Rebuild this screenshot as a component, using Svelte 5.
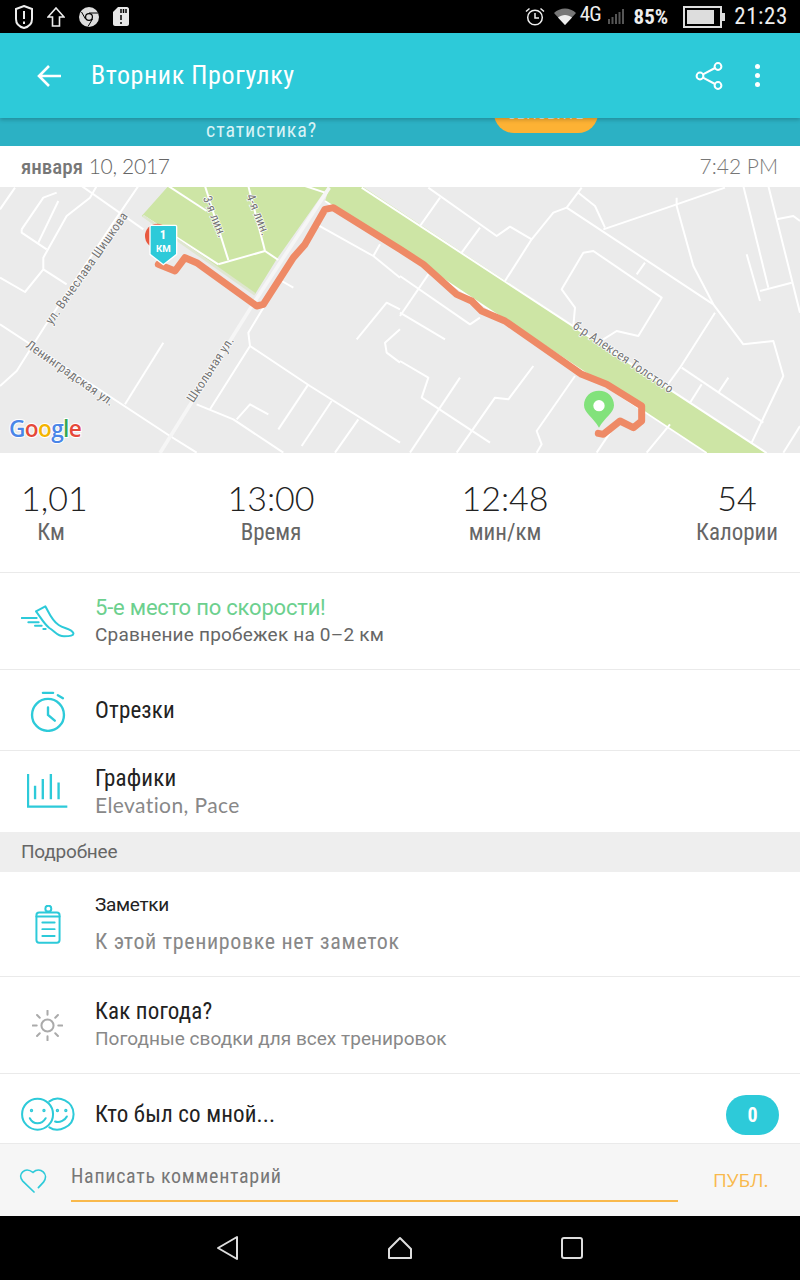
<script>
	// map geometry is in 3x px of the map box, split at the middle (right half is offset)
	const leftRoads = [
		'0,70 45,5', '245,0 430,130', '290,0 270,35 200,90 130,215 130,250 75,318 0,275',
		'130,250 200,295', '65,130 130,35 170,20', '65,130 65,140 140,190', '175,45 115,170',
		'415,0 340,110 135,420 50,555 0,600', '0,415 510,750 590,800', '375,655 490,470',
		'790,365 745,440 750,480 630,670', '750,480 930,600 1200,770', '925,595 835,730',
		'995,645 905,780', '1075,700 1005,800', '590,655 700,700 850,800', '710,700 750,655 805,685',
		'845,285 880,305', '950,115 1120,210 1200,275', '1140,175 1120,210', '1070,460 1160,350 1200,370',
		'1200,430 1155,470 1160,500 1200,530', '915,0 975,20'
	];
	const rightRoads = [
		'85,5 290,150 330,122 395,160', '120,35 60,120', '240,125 185,200', '395,160 315,285',
		'395,160 460,80 500,65 545,5', '500,65 940,355 1030,475 1120,465 1150,570 1055,770',
		'535,20 585,60 615,125', '610,130 830,55 975,5', '830,35 830,60 880,240 940,355',
		'1030,0 1105,305', '1105,0 1200,380', '1040,205 1080,345', '1080,315 1175,290', '1130,100 1180,90 1200,105',
		'610,460 650,435 715,450 785,335 580,195 550,200 485,310 525,365 520,420', '735,230 710,265',
		'945,380 840,545 800,600', '845,545 1090,710', '905,595 870,650', '985,575 955,620',
		'0,270 210,415 240,395', '85,265 0,390', '0,380 135,460', '0,525 85,575 65,635 270,770',
		'180,575 30,800', '400,540 325,640 285,635 170,800', '525,570 410,735 425,775 410,800',
		'630,740 590,800', '810,715 740,800', '1150,800 1200,720'
	];
	const parkPaths = [
		'505,0 620,75', '615,0 685,222', '745,0 795,195', '655,235 795,195', '795,195 835,222', '430,90 655,235'
	];
	const route = '475,235 525,255 555,215 590,230 770,360 790,355 880,215 915,175 975,70 1000,65 1200,190 1270,235 1370,325 1415,345 1445,375 1515,405 1745,565 1820,595 1925,660 1925,705 1900,725 1860,705 1810,745 1795,742';
	const stats = [
		{ value: '1,01', label: 'Км' },
		{ value: '13:00', label: 'Время' },
		{ value: '12:48', label: 'мин/км' },
		{ value: '54', label: 'Калории' }
	];
</script>

<div class="screen">
	<div class="status">
		<div class="status-left">
			<svg width="18" height="24" viewBox="0 0 18 24" fill="none" stroke="#eee" stroke-width="2">
				<path d="M9 1 L17 4 V14 C17 19 13 22 9 23 C5 22 1 19 1 14 V4Z" />
				<path d="M9 6 V14 M9 16.5 V19" />
			</svg>
			<svg width="18" height="20" viewBox="0 0 18 20" fill="none" stroke="#eee" stroke-width="1.6">
				<path d="M9 1 L17 10 H12.5 V19 H5.5 V10 H1Z" />
			</svg>
			<svg width="20" height="20" viewBox="0 0 20 20">
				<circle cx="10" cy="10" r="10" fill="#ddd" />
				<circle cx="10" cy="10" r="4" fill="#000" />
				<circle cx="10" cy="10" r="2.8" fill="#ddd" />
				<path d="M10 6 H19 M6.5 12 L2.5 5 M13.5 12 L9 19.5" stroke="#000" stroke-width="1" />
			</svg>
			<svg width="16" height="19" viewBox="0 0 16 19">
				<path d="M5 0 H14 C15 0 16 1 16 2 V17 C16 18 15 19 14 19 H2 C1 19 0 18 0 17 V5Z" fill="#e8e8e8" />
				<path d="M8 2 V6 M10.5 2 V6 M13 2 V6 M8 8 V13 M8 15 V17" stroke="#000" stroke-width="1.5" />
			</svg>
		</div>
		<div class="status-right">
			<svg class="alarm" width="20" height="19" viewBox="0 0 20 19" fill="none" stroke="#eee" stroke-width="1.5">
				<circle cx="10" cy="10.5" r="7.3" />
				<path d="M10 6 V11 H14 M1 4.5 L4.5 1.5 M19 4.5 L15.5 1.5" />
			</svg>
			<svg class="wifi" width="22" height="17" viewBox="0 0 22 17">
				<path d="M0 5 C6 -1 16 -1 22 5 L11 17Z" fill="#777" />
				<path d="M4 9.5 C8 6 14 6 18 9.5 L11 17Z" fill="#eee" />
			</svg>
			<span class="net">4G</span>
			<svg class="signal" width="16" height="15" viewBox="0 0 16 15" fill="#555">
				<rect x="0" y="10" width="2" height="5" />
				<rect x="3.5" y="8" width="2" height="7" />
				<rect x="7" y="5" width="2" height="10" />
				<rect x="10.5" y="3" width="2" height="12" />
				<rect x="14" y="0" width="2" height="15" />
			</svg>
			<span class="pct">85%</span>
			<svg class="battery" width="42" height="22" viewBox="0 0 42 22">
				<rect x="1" y="1" width="37" height="20" fill="none" stroke="#ddd" stroke-width="2" />
				<rect x="4" y="4" width="27" height="14" fill="#ddd" />
				<rect x="39" y="7" width="3" height="8" fill="#ddd" />
			</svg>
			<span class="clock">21:23</span>
		</div>
	</div>

	<header class="appbar">
		<svg class="back" width="24" height="24" viewBox="0 0 24 24" fill="none" stroke="#fff" stroke-width="2.6">
			<path d="M24 12 H3 M12 2 L2 12 L12 22" />
		</svg>
		<h1>Вторник Прогулку</h1>
		<svg class="share" width="28" height="28" viewBox="0 0 28 28" fill="none" stroke="#fff" stroke-width="2">
			<circle cx="5" cy="14" r="3.4" />
			<circle cx="23" cy="4.5" r="3.4" />
			<circle cx="23" cy="23.5" r="3.4" />
			<path d="M8 12.4 L20 6 M8 15.6 L20 22" />
		</svg>
		<div class="dots"><i></i><i></i><i></i></div>
	</header>

	<div class="promo">
		<span class="promo-text">статистика?</span>
		<span class="promo-btn">ОБНОВИТЬ</span>
	</div>

	<div class="dateline">
		<span><span class="month">января</span> <span class="day">10, 2017</span></span>
		<span class="time">7:42 PM</span>
	</div>

	<svg class="map" width="800" height="266" viewBox="0 3 2400 798">
		<rect x="0" y="0" width="2400" height="810" fill="#ebebeb" />
		<polygon points="425,90 505,0 985,0 830,220 765,325" fill="#cde5a5" />
		<polygon points="990,0 1085,0 2300,801 2120,801 975,45" fill="#cde5a5" />
		<g fill="none" stroke="#fff" stroke-width="6" stroke-linejoin="round">
			{#each leftRoads as pts}
				<polyline points={pts} />
			{/each}
			<g transform="translate(1200 0)">
				{#each rightRoads as pts}
					<polyline points={pts} />
				{/each}
			</g>
			{#each parkPaths as pts}
				<polyline points={pts} />
			{/each}
			<polyline points="1085,5 2300,801" />
			<polyline points="975,45 2120,801" stroke-width="5" />
			<polyline points="988,5 765,345 480,801" stroke="#f6f6f6" stroke-width="11" />
			<polyline points="430,90 765,325" stroke="#dfe6d0" stroke-width="8" />
		</g>
		<g class="map-label">
			<text transform="translate(155 418) rotate(-55)">ул. Вячеслава Шишкова</text>
			<text transform="translate(75 482) rotate(35)">Ленинградская ул.</text>
			<text transform="translate(580 652) rotate(-57)">Школьная ул.</text>
			<text transform="translate(608 36) rotate(68)">3-я лин.</text>
			<text transform="translate(738 30) rotate(68)">4-я лин.</text>
			<text transform="translate(1716 425) rotate(34)">б-р Алексея Толстого</text>
		</g>
		<circle cx="472" cy="150" r="37" fill="#e8593f" />
		<polyline points={route} fill="none" stroke="#ee8a66" stroke-width="21" stroke-linejoin="round" stroke-linecap="round" />
		<path d="M454 118 H526 C529 118 530 120 530 122 V205 L490 236 L450 205 V122 C450 120 451 118 454 118Z" fill="#2dcad9" stroke="#fff" stroke-width="4" />
		<text class="pin-1" x="489" y="159">1</text>
		<text class="pin-km" x="490" y="199">КМ</text>
		<path d="M1797 725 C1780 695 1752 680 1752 658 C1752 632 1772 614 1797 614 C1822 614 1842 632 1842 658 C1842 680 1814 695 1797 725Z" fill="#82e27b" />
		<circle cx="1797" cy="659" r="17" fill="#fff" />
		<text class="google" x="27" y="752"><tspan fill="#4a86e8">G</tspan><tspan fill="#e5493a">o</tspan><tspan fill="#f4b400">o</tspan><tspan fill="#4a86e8">g</tspan><tspan fill="#34a853">l</tspan><tspan fill="#e5493a">e</tspan></text>
	</svg>

	<section class="stats">
		{#each stats as s}
			<div class="stat">
				<div class="stat-value">{s.value}</div>
				<div class="stat-label">{s.label}</div>
			</div>
		{/each}
	</section>

	<div class="row rank">
		<div class="icon">
			<svg width="54" height="33" viewBox="63 103 162 99" fill="none" stroke="#2dcad9" stroke-width="6" stroke-linejoin="round" stroke-linecap="round">
				<path d="M108 122 L136 107 C146 122 152 146 176 163 C192 174 215 174 220 187 C222 195 210 197 192 197 C172 197 165 182 148 172 C132 160 122 140 108 122Z" />
				<path d="M65 142 H110 M85 155 H116 M105 165 H125 M130 175 H137" />
			</svg>
		</div>
		<div>
			<div class="rank-title">5-е место по скорости!</div>
			<div class="rank-sub">Сравнение пробежек на 0–2 км</div>
		</div>
	</div>

	<div class="row splits">
		<div class="icon">
			<svg width="36" height="41" viewBox="90 360 106 120" fill="none" stroke="#2dcad9" stroke-width="7" stroke-linecap="round">
				<circle cx="143" cy="430" r="47" />
				<path d="M143 408 V430 L163 447 M128 365 H158 M172 372 L187 381" />
			</svg>
		</div>
		<div class="row-title">Отрезки</div>
	</div>

	<div class="row charts">
		<div class="icon">
			<svg width="41" height="35" viewBox="84 612 122 104" fill="none" stroke="#2dcad9" stroke-width="7">
				<path d="M87 615 V712 H204 M108 650 V690 M131 630 V690 M155 615 V690 M178 640 V690" />
			</svg>
		</div>
		<div>
			<div class="row-title">Графики</div>
			<div class="row-latin">Elevation, Pace</div>
		</div>
	</div>

	<div class="section-head">Подробнее</div>

	<div class="row notes">
		<div class="icon">
			<svg width="26" height="39" viewBox="106 93 78 118" fill="none" stroke="#2dcad9" stroke-width="6" stroke-linecap="round">
				<rect x="110" y="116" width="70" height="91" rx="8" />
				<circle cx="146" cy="104" r="9" />
				<path d="M110 128 H180 M128 146 H165 M128 166 H165 M128 187 H165" />
			</svg>
		</div>
		<div>
			<div class="notes-title">Заметки</div>
			<div class="notes-sub">К этой тренировке нет заметок</div>
		</div>
	</div>

	<div class="row weather">
		<div class="icon">
			<svg width="31" height="31" viewBox="97 419 92 92" fill="none" stroke="#aaa" stroke-width="6" stroke-linecap="round">
				<circle cx="143" cy="465" r="18" />
				<path d="M143 421 V433 M143 497 V509 M99 465 H111 M175 465 H187 M112 434 L120 442 M166 488 L174 496 M112 496 L120 488 M166 442 L174 434" />
			</svg>
		</div>
		<div>
			<div class="row-title">Как погода?</div>
			<div class="row-sub">Погодные сводки для всех тренировок</div>
		</div>
	</div>

	<div class="row friends">
		<div class="icon">
			<svg width="54" height="35" viewBox="64 682 160 104" fill="none" stroke="#2dcad9" stroke-width="6" stroke-linecap="round">
				<circle cx="113" cy="733" r="46" />
				<path d="M148 695 C175 675 220 695 220 733 C220 770 175 790 148 772" />
				<path d="M90 745 C100 765 125 765 137 745 M165 755 C180 760 195 750 200 740" />
				<circle cx="95" cy="722" r="2" />
				<circle cx="132" cy="722" r="2" />
				<circle cx="172" cy="722" r="2" />
				<circle cx="197" cy="722" r="2" />
			</svg>
		</div>
		<div class="row-title">Кто был со мной...</div>
		<span class="badge">0</span>
	</div>

	<footer class="comment">
		<svg class="heart" width="28" height="25" viewBox="58 890 82 74" fill="none" stroke="#2dcad9" stroke-width="5" stroke-linecap="round">
			<path d="M102 961 L68 928 C52 908 75 885 99 903 C120 885 148 908 130 932 L115 948" />
		</svg>
		<input class="comment-input" placeholder="Написать комментарий" />
		<span class="publish">ПУБЛ.</span>
	</footer>

	<nav class="navbar">
		<svg width="24" height="26" viewBox="0 0 24 26" fill="none" stroke="#ddd" stroke-width="2" stroke-linejoin="round">
			<path d="M21 2 V24 L2 13Z" />
		</svg>
		<svg width="24" height="24" viewBox="0 0 24 24" fill="none" stroke="#ddd" stroke-width="2" stroke-linejoin="round">
			<path d="M12 2 L23 13 V22 H1 V13Z" />
		</svg>
		<svg width="24" height="24" viewBox="0 0 24 24" fill="none" stroke="#ddd" stroke-width="2" stroke-linejoin="round">
			<rect x="2" y="2" width="20" height="20" rx="2" />
		</svg>
	</nav>
</div>

<style>
	:global(body) {
		margin: 0;
		background: #fff;
	}

	.screen {
		width: 800px;
		height: 1280px;
		display: flex;
		flex-direction: column;
		overflow: hidden;
		font-family: Roboto, "Noto Sans", sans-serif;
		font-stretch: 85%;
	}

	.status {
		height: 33px;
		flex: none;
		background: #000;
		display: flex;
		justify-content: space-between;
		align-items: center;
		padding: 0 12px 0 15px;
		color: #eee;
	}
	.status-left {
		display: flex;
		align-items: center;
		gap: 14px;
	}
	.status-right {
		display: flex;
		align-items: center;
	}
	.wifi { margin-left: 9px; }
	.net {
		font-size: 21px;
		margin-left: 4px;
		margin-top: -6px;
		letter-spacing: -1px;
	}
	.signal { margin-left: 7px; }
	.pct {
		font-size: 21px;
		font-weight: 700;
		margin-left: 10px;
	}
	.battery { margin-left: 15px; }
	.clock {
		font-size: 23px;
		margin-left: 9px;
		letter-spacing: 0.6px;
	}

	.appbar {
		height: 85px;
		flex: none;
		background: #2dcad9;
		display: flex;
		align-items: center;
		color: #fff;
		padding-left: 37px;
		position: relative;
		z-index: 1;
		box-shadow: 0 2px 4px rgba(0, 0, 0, 0.2);
	}
	.appbar h1 {
		font-size: 26px;
		font-weight: 400;
		margin: 0 0 2px 30px;
		letter-spacing: 0.6px;
		flex: 1;
	}
	.share { margin-right: 32px; }
	.dots {
		display: flex;
		flex-direction: column;
		gap: 4px;
		margin-right: 40px;
	}
	.dots i {
		width: 5px;
		height: 5px;
		border-radius: 50%;
		background: #fff;
	}

	.promo {
		height: 28px;
		flex: none;
		background: #2cb1c4;
		display: flex;
		align-items: flex-end;
		padding-left: 206px;
		overflow: hidden;
		color: #d9f3f6;
	}
	.promo-text {
		font-size: 20px;
		line-height: 24px;
		width: 288px;
		flex: none;
		margin-bottom: 4px;
		letter-spacing: 0.9px;
	}
	.promo-btn {
		width: 104px;
		height: 40px;
		flex: none;
		margin-bottom: 13px;
		border-radius: 0 0 20px 20px;
		background: #fdb234;
		font-size: 17px;
		text-align: center;
		line-height: 40px;
	}

	.dateline {
		height: 41px;
		flex: none;
		display: flex;
		justify-content: space-between;
		align-items: center;
		padding: 0 22px 2px 21px;
		box-sizing: border-box;
		font-family: Lato, Roboto, sans-serif;
		font-weight: 300;
		font-size: 21px;
		color: #666;
	}
	.month {
		font-family: Roboto, sans-serif;
		font-weight: 500;
		font-size: 21px;
		color: #777;
	}
	.day { letter-spacing: -0.3px; }
	.time { color: #777; }

	.map {
		display: block;
		flex: none;
	}
	.map-label text {
		font-family: Roboto, sans-serif;
		font-size: 38px;
		letter-spacing: 1px;
		fill: #757575;
		stroke: #fff;
		stroke-width: 4px;
		paint-order: stroke;
	}
	.pin-1, .pin-km {
		font-family: Roboto, sans-serif;
		font-weight: 700;
		fill: #fff;
		text-anchor: middle;
	}
	.pin-1 { font-size: 38px; }
	.pin-km { font-size: 29px; font-stretch: 100%; }
	.google {
		font-family: "Open Sans", sans-serif;
		font-stretch: 100%;
		font-size: 68px;
		letter-spacing: -2px;
		font-weight: 600;
		stroke: #fff;
		stroke-width: 6px;
		paint-order: stroke;
	}

	.stats {
		height: 120px;
		flex: none;
		display: grid;
		grid-template-columns: 60px 88px 88px 84px;
		justify-content: space-between;
		align-items: center;
		padding: 0 21px;
		box-sizing: border-box;
		border-bottom: 1px solid #eaeaea;
	}
	.stat { text-align: center; }
	.stat-value {
		font-family: Lato, Roboto, sans-serif;
		font-weight: 300;
		font-size: 34px;
		line-height: 40px;
		color: #222;
	}
	.stat-label {
		font-size: 23px;
		line-height: 30px;
		color: #666;
	}

	.row {
		display: flex;
		align-items: center;
		flex: none;
		box-sizing: border-box;
		border-bottom: 1px solid #eaeaea;
	}
	.icon {
		width: 95px;
		flex: none;
		display: flex;
		justify-content: center;
		align-items: center;
	}
	.rank { height: 97px; }
	.splits, .charts { height: 81px; }
	.splits { padding-top: 2px; }
	.charts {
		border-bottom: none;
		padding-bottom: 2px;
	}
	.notes { height: 105px; }
	.weather { height: 97px; }
	.friends {
		height: 70px;
		padding: 12px 21px 0 0;
	}
	.friends .row-title { flex: 1; }

	.rank-title {
		font-size: 22px;
		font-stretch: 100%;
		line-height: 28px;
		color: #6cd08e;
		letter-spacing: -0.2px;
	}
	.rank-sub {
		font-size: 19px;
		font-stretch: 100%;
		line-height: 26px;
		color: #666;
		letter-spacing: 0.2px;
	}
	.row-title {
		font-size: 23px;
		line-height: 28px;
		color: #222;
		letter-spacing: 0.15px;
	}
	.row-latin {
		font-family: Lato, Roboto, sans-serif;
		font-size: 21px;
		line-height: 24px;
		color: #888;
		letter-spacing: 0.4px;
	}
	.row-sub {
		font-size: 19px;
		font-stretch: 100%;
		line-height: 26px;
		color: #888;
		letter-spacing: 0.03px;
	}
	.notes-title {
		font-size: 19px;
		font-stretch: 100%;
		line-height: 26px;
		color: #222;
		letter-spacing: -0.3px;
		padding-top: 1px;
	}
	.notes-sub {
		font-size: 22px;
		line-height: 30px;
		margin-top: 9px;
		color: #888;
		letter-spacing: 0.65px;
	}

	.section-head {
		height: 40px;
		flex: none;
		box-sizing: border-box;
		padding: 0 0 2px 21px;
		background: #eee;
		display: flex;
		align-items: center;
		font-size: 19px;
		font-stretch: 100%;
		letter-spacing: -0.2px;
		color: #666;
	}

	.badge {
		width: 53px;
		height: 40px;
		border-radius: 20px;
		background: #2dcad9;
		color: #fff;
		font-size: 20px;
		font-weight: 700;
		display: flex;
		align-items: center;
		justify-content: center;
	}

	.comment {
		height: 72px;
		flex: none;
		background: #f6f6f6;
		display: flex;
		align-items: center;
		padding-left: 19px;
		box-sizing: border-box;
	}
	.heart { flex: none; }
	.comment-input {
		width: 607px;
		height: 35px;
		margin: 0 0 0 24px;
		padding: 0 0 6px;
		box-sizing: content-box;
		border: none;
		border-bottom: 2px solid #f9b94c;
		background: transparent;
		font: 20px Roboto, sans-serif;
		font-stretch: 85%;
		letter-spacing: 0.7px;
		outline: none;
	}
	.comment-input::placeholder {
		color: #777;
		opacity: 1;
	}
	.publish {
		margin-left: 35px;
		font-family: "Open Sans", sans-serif;
		font-stretch: 100%;
		font-size: 19px;
		color: #f9b94c;
	}

	.navbar {
		flex: 1;
		background: #000;
		display: flex;
		justify-content: center;
		align-items: center;
		gap: 148px;
	}
</style>
